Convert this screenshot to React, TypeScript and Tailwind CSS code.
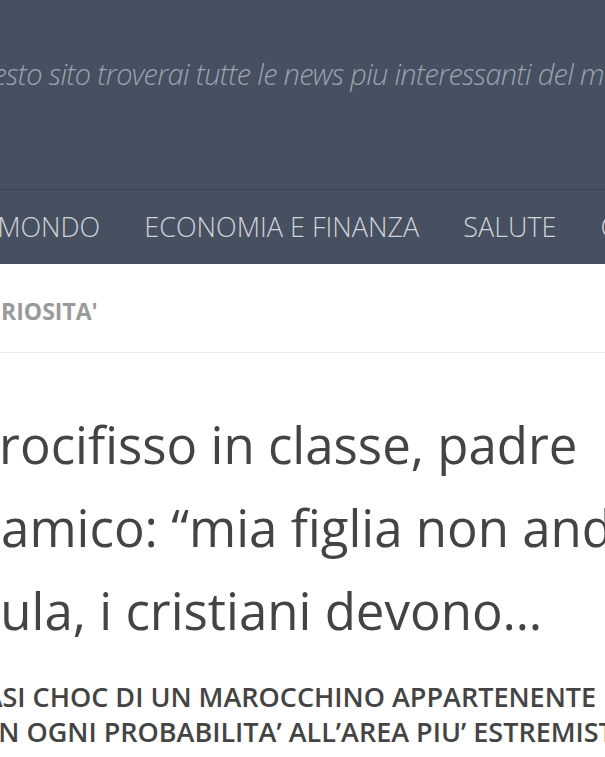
const NAV_ITEMS = ["DAL MONDO", "ECONOMIA E FINANZA", "SALUTE", "CURIOSITA'"];

const TITLE_LINES = [
  { text: "Crocifisso in classe, padre", shift: "-ml-[33px]" },
  { text: "islamico: “mia figlia non andrà in", shift: "-ml-[49px]" },
  { text: "aula, i cristiani devono…", shift: "-ml-[28px]" },
];

const SUBTITLE_LINES = [
  { text: "FRASI CHOC DI UN MAROCCHINO APPARTENENTE", shift: "-ml-[47px]" },
  { text: "IN OGNI PROBABILITA’ ALL’AREA PIU’ ESTREMISTA", shift: "-ml-[10px]" },
];

export default function App() {
  return (
    <div
      className="w-[605px] h-[757px] overflow-hidden bg-white"
      style={{ fontFamily: '"Open Sans", "Liberation Sans", sans-serif' }}
    >
      <header className="h-[189px] bg-[#465060] pt-[54px] overflow-hidden">
        <p className="-ml-[68px] whitespace-nowrap text-[29px] leading-[40px] tracking-[-0.7px] italic font-light text-[#9aa3b1]">
          In questo sito troverai tutte le news piu interessanti del mondo
        </p>
      </header>

      <nav className="h-[75px] border-t border-[#3a4250] bg-[#465060] flex items-center overflow-hidden">
        <ul className="-ml-[59px] flex items-center gap-[44px] whitespace-nowrap text-[27px] font-light text-[#cfd3da]">
          {NAV_ITEMS.map((item) => (
            <li key={item}>{item}</li>
          ))}
        </ul>
      </nav>

      <div className="h-[89px] pt-[6px] border-b border-[#ececec] flex items-center overflow-hidden">
        <span className="-ml-[31px] whitespace-nowrap text-[23px] font-bold text-[#9a9a9a]">
          CURIOSITA'
        </span>
      </div>

      <h1 className="mt-[50px] whitespace-nowrap text-[51px] leading-[83px] font-normal text-[#444]">
        {TITLE_LINES.map((line) => (
          <span key={line.text} className={`block ${line.shift}`}>
            {line.text}
          </span>
        ))}
      </h1>

      <h2 className="mt-[27px] whitespace-nowrap text-[27px] leading-[35px] font-semibold text-[#444]">
        {SUBTITLE_LINES.map((line) => (
          <span key={line.text} className={`block ${line.shift}`}>
            {line.text}
          </span>
        ))}
      </h2>
    </div>
  );
}
